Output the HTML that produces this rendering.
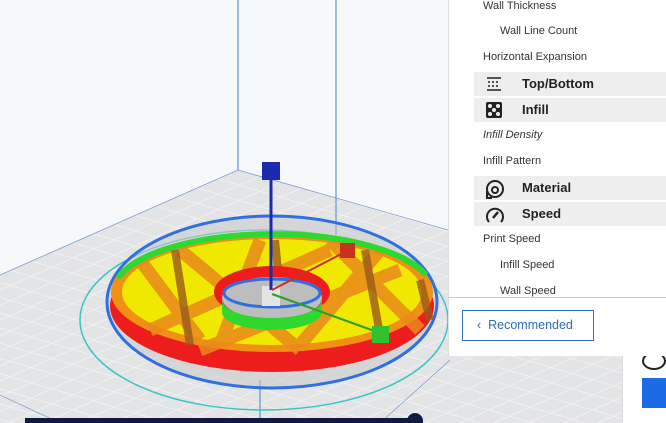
<!DOCTYPE html><html><head><style>
body{margin:0;width:666px;height:423px;overflow:hidden;background:#f7f8f9;font-family:"Liberation Sans","DejaVu Sans",sans-serif;position:relative}
svg.v{position:absolute;left:0;top:0}
.panel{position:absolute;left:448px;top:0;width:218px;height:355px;background:#fff;border-left:1px solid #ddd;border-bottom:1px solid #ccc}
.r{position:absolute;font-size:11px;color:#333;white-space:nowrap}
.h{position:absolute;left:25px;width:193px;height:24px;background:#eeeeee}
.h span{position:absolute;left:48px;top:4px;font-size:13px;font-weight:bold;color:#222}
.h svg{position:absolute;left:10px;top:3px}
.btn{position:absolute;left:13px;top:310px;width:132px;height:31px;border:1px solid #3371b8;box-sizing:border-box;color:#2f6cb5;font-size:12.5px;line-height:29px;padding-left:14px}
</style></head><body>
<svg class="v" width="666" height="423" viewBox="0 0 666 423">
<defs><pattern id="g" width="16" height="16" patternUnits="userSpaceOnUse" patternTransform="matrix(1.3,-0.57,1.3,0.38,238,170)"><rect width="16" height="16" fill="#e3e4e6"/><path d="M0 0H16M0 0V16" stroke="#f4f4f5" stroke-width="1.6"/></pattern></defs>
<polygon points="238,170 448,230 666,290 666,423 0,423 0,275" fill="url(#g)"/>
<path d="M238,170 L0,275 M238,170 L448,230" stroke="#7a9ccf" stroke-width="0.8" fill="none"/>
<path d="M238,0 V170 M336,0 V235 M260,423 V380" stroke="#4a7fc4" stroke-width="1"/>
<path d="M0,395 L60,423 M380,423 L450,360" stroke="#6a8fd0" stroke-width="0.6"/>
<ellipse cx="264" cy="320" rx="184" ry="90" fill="none" stroke="#36c6c6" stroke-width="1.5"/>
<ellipse cx="272" cy="302" rx="165" ry="86" fill="#c9c9c9" fill-opacity="0.55" stroke="#2f6fe0" stroke-width="3"/>
<ellipse cx="272" cy="306" rx="162" ry="66" fill="#ee1d1d"/>
<ellipse cx="272" cy="292" rx="161" ry="60" fill="#f09015"/>
<ellipse cx="272" cy="292" rx="150" ry="53" fill="#f0e800"/>
<path d="M140,260 L200,340 M180,250 L300,350 M330,240 L420,330 M150,330 L330,250 M200,350 L400,270 M380,250 L300,345 M260,240 L220,345" stroke="#e98a1c" stroke-width="13" opacity="0.85"/>
<path d="M175,250 L190,345 M275,240 L278,270 M365,250 L380,335 M420,280 L430,320" stroke="#9a5a1a" stroke-width="8" opacity="0.8"/>
<path d="M118,278 A160,58 0 0 1 426,275" stroke="#2fd82f" stroke-width="6" fill="none"/>
<ellipse cx="272" cy="292" rx="58" ry="26" fill="#ee1d1d"/>
<ellipse cx="272" cy="298" rx="50" ry="21" fill="#bdbdbd"/>
<path d="M222,300 A50,18 0 0 0 322,300 L322,312 A50,18 0 0 1 222,312Z" fill="#2fd82f"/>
<ellipse cx="272" cy="293" rx="48" ry="14" fill="none" stroke="#2f6fe0" stroke-width="3"/>
<rect x="262" y="286" width="18" height="20" fill="#e4e4e4"/>
<line x1="271" y1="178" x2="271" y2="290" stroke="#1a2bb0" stroke-width="3"/>
<rect x="262" y="162" width="18" height="18" fill="#1a2bb0"/>
<line x1="272" y1="290" x2="345" y2="252" stroke="#c8321a" stroke-width="2"/>
<rect x="340" y="243" width="15" height="15" fill="#c8321a"/>
<line x1="272" y1="294" x2="380" y2="333" stroke="#2aa02a" stroke-width="2"/>
<rect x="372" y="326" width="17" height="17" fill="#30c030"/>
<rect x="25" y="418" width="390" height="6" fill="#101a40"/>
<circle cx="415" cy="421" r="8" fill="#101a40"/>
</svg>
<div style="position:absolute;left:622px;top:356px;width:44px;height:67px;background:#fff;border-left:1px solid #ddd"></div>
<div style="position:absolute;left:642px;top:378px;width:24px;height:30px;background:#1c6be6"></div>
<div style="position:absolute;left:642px;top:352px;width:20px;height:14px;border:2px solid #222;border-radius:50%;border-top-color:transparent"></div>
<div class="panel">
<div class="r" style="left:34px;top:0px">Wall Thickness</div>
<div class="r" style="left:51px;top:25px">Wall Line Count</div>
<div class="r" style="left:34px;top:51px">Horizontal Expansion</div>
<div class="h" style="top:72px"><svg width="20" height="18"><path d="M3,3H17M3,15H17" stroke="#222" stroke-width="1.5"/><path d="M4,7H16M4,11H16" stroke="#222" stroke-width="1.5" stroke-dasharray="2 2"/></svg><span>Top/Bottom</span></div>
<div class="h" style="top:98px"><svg width="20" height="18"><rect x="2" y="1" width="16" height="16" rx="2" fill="#222"/><circle cx="6" cy="5" r="2" fill="#eee"/><circle cx="14" cy="5" r="2" fill="#eee"/><circle cx="10" cy="9" r="2" fill="#eee"/><circle cx="6" cy="13" r="2" fill="#eee"/><circle cx="14" cy="13" r="2" fill="#eee"/></svg><span>Infill</span></div>
<div class="r" style="left:34px;top:129px;font-style:italic">Infill Density</div>
<div class="r" style="left:34px;top:155px">Infill Pattern</div>
<div class="h" style="top:176px"><svg width="22" height="20"><circle cx="11" cy="10" r="8" fill="none" stroke="#222" stroke-width="2"/><circle cx="11" cy="11" r="3" fill="none" stroke="#222" stroke-width="2"/><path d="M3,12 V19 H8" stroke="#222" stroke-width="2" fill="none"/></svg><span>Material</span></div>
<div class="h" style="top:202px"><svg width="22" height="20"><path d="M5,17 A8,8 0 1 1 17,17" fill="none" stroke="#222" stroke-width="2"/><path d="M9,13 L14,7" stroke="#222" stroke-width="2.5"/></svg><span>Speed</span></div>
<div class="r" style="left:34px;top:233px">Print Speed</div>
<div class="r" style="left:51px;top:259px">Infill Speed</div>
<div class="r" style="left:51px;top:285px">Wall Speed</div>
<div style="position:absolute;left:0;top:297px;width:218px;height:58px;background:#fff;border-top:1px solid #ccc"></div>
<div class="btn">&lsaquo;&nbsp; Recommended</div>
</div>
</body></html>
